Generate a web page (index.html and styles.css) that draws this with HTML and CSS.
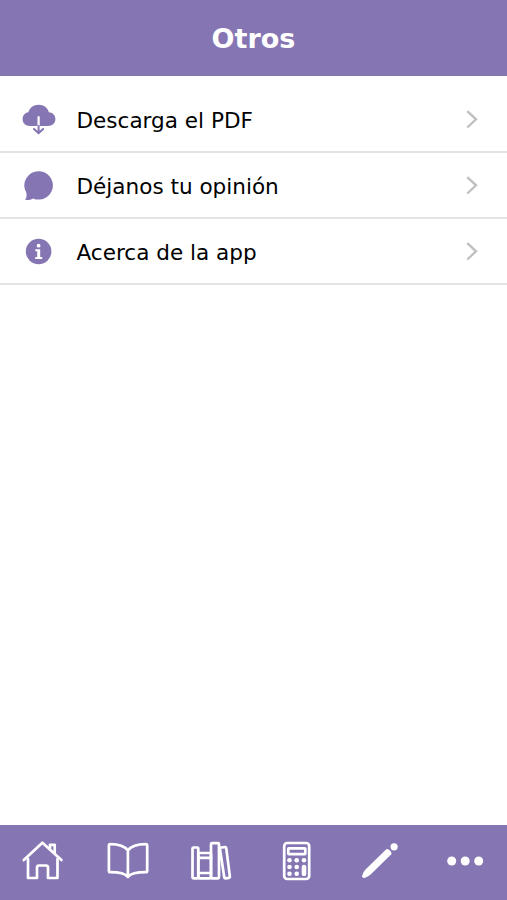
FILE: index.html
```html
<!DOCTYPE html>
<html lang="es">
<head>
    <meta charset="UTF-8">
    <meta name="viewport" content="width=device-width, initial-scale=1.0">
    <title>Otros</title>
    <link rel="stylesheet" href="styles.css">
</head>
<body>

    <header class="header">
        <h1>Otros</h1>
    </header>

    <main class="content">
        <ul class="menu">
            <li>
                <a href="#" class="menu-item">
                    <svg class="menu-icon" viewBox="0 0 40 40">
                        <path fill="currentColor" d="M12 26.9c-4.300 0-7.400-2.700-7.400-6.700 0-3.700 2.300-6.300 5.700-6.900C11.600 8.800 15.500 5.800 20.600 5.800s9.200 3 10.300 7.500c4 .4 6.500 3.100 6.500 6.700 0 4.100-3 6.900-7.400 6.900z"/>
                        <path class="cut" d="M20.600 17.300v9.600"/>
                        <path class="arrow" d="M20.600 26.900v7.200M16 29.900l4.600 4.200 4.600-4.200"/>
                    </svg>
                    <span class="label">Descarga el PDF</span>
                    <svg class="chevron" viewBox="0 0 12 20"><path d="M1.300 2.100l8.700 8.200-8.700 8.200"/></svg>
                </a>
            </li>
            <li>
                <a href="#" class="menu-item">
                    <svg class="menu-icon" viewBox="0 0 40 40">
                        <path fill="currentColor" d="M20.600 6.200a14.200 14.200 0 1 1-5.600 27.200c-2.200 1.300-4.800 1.700-8 1.400 1.500-1.900 1.900-3.700 1.300-7.300A14.200 14.200 0 0 1 20.600 6.200z"/>
                    </svg>
                    <span class="label">Déjanos tu opinión</span>
                    <svg class="chevron" viewBox="0 0 12 20"><path d="M1.300 2.100l8.700 8.200-8.700 8.200"/></svg>
                </a>
            </li>
            <li>
                <a href="#" class="menu-item">
                    <svg class="menu-icon" viewBox="0 0 40 40">
                        <circle fill="currentColor" cx="20.600" cy="20.500" r="12.800"/>
                        <circle fill="#fff" cx="20.600" cy="14.700" r="1.900"/>
                        <path fill="#fff" d="M17.300 18.200h4.900V26h2v2h-7v-2h2v-5.800h-1.900z"/>
                    </svg>
                    <span class="label">Acerca de la app</span>
                    <svg class="chevron" viewBox="0 0 12 20"><path d="M1.300 2.100l8.700 8.200-8.700 8.200"/></svg>
                </a>
            </li>
        </ul>
    </main>

    <nav class="tabs">
        <a href="#" class="tab" aria-label="Inicio">
            <svg viewBox="0 0 48 48">
                <path d="M10 22v19h9V30.5a2 2 0 0 1 2-2h7a2 2 0 0 1 2 2V41h9.5V22"/>
                <path d="M5.8 23L24.4 5.7 43.4 23M32 12V7.8h4.7v8.5"/>
            </svg>
        </a>
        <a href="#" class="tab" aria-label="Lectura">
            <svg viewBox="0 0 48 48">
                <path d="M24.9 13.5c-3-4-9.5-6.3-17.5-6.3a1.5 1.5 0 0 0-1.5 1.5v25a1.5 1.5 0 0 0 1.5 1.5c8 0 14.5 1 17.5 4.7 3-3.7 9.5-4.7 17.8-4.7a1.5 1.5 0 0 0 1.5-1.5v-25a1.5 1.5 0 0 0-1.5-1.5c-8.3 0-14.8 2.3-17.8 6.3zV39.5"/>
            </svg>
        </a>
        <a href="#" class="tab" aria-label="Biblioteca">
            <svg viewBox="0 0 48 48">
                <rect x="5.5" y="10.5" width="5.8" height="30.8" rx="1"/>
                <rect x="11.3" y="16" width="12.7" height="25.3" rx="1"/>
                <path d="M11.3 20.9H24M11.3 36H24"/>
                <rect x="24" y="6.2" width="8" height="35.1" rx="1"/>
                <path d="M33.8 10.6l4.3-.6a1 1 0 0 1 1.1.9l3.7 28.8a1 1 0 0 1-.9 1.1l-3.6.5a1 1 0 0 1-1.1-.9l-4.4-28.7a1 1 0 0 1 .9-1.1z"/>
            </svg>
        </a>
        <a href="#" class="tab" aria-label="Calculadora">
            <svg viewBox="0 0 48 48">
                <rect x="12.2" y="6" width="25" height="36" rx="3"/>
                <rect x="16.3" y="11.3" width="17" height="5.8" rx=".5"/>
                <g class="solid">
                    <circle cx="17.5" cy="23.2" r="2.3"/>
                    <circle cx="24.7" cy="23.2" r="2.3"/>
                    <circle cx="32" cy="23.2" r="2.3"/>
                    <circle cx="17.5" cy="30" r="2.3"/>
                    <circle cx="24.7" cy="30" r="2.3"/>
                    <circle cx="17.5" cy="36.8" r="2.3"/>
                    <circle cx="24.7" cy="36.8" r="2.3"/>
                    <rect x="29.7" y="27.7" width="4.6" height="11.4" rx="2.2"/>
                </g>
            </svg>
        </a>
        <a href="#" class="tab" aria-label="Notas">
            <svg viewBox="0 0 48 48">
                <g class="solid">
                    <circle cx="38.1" cy="9.8" r="3.6"/>
                    <path d="M30.3 12.2q1.6-.8 3.7 1.300 2.100 2.100 1.300 3.700L14.600 37.500q-2.600 2.200-6 3.400-2.500.3-2.600-2 1-3.700 3.500-6.300z"/>
                </g>
            </svg>
        </a>
        <a href="#" class="tab" aria-label="Otros">
            <svg viewBox="0 0 48 48">
                <g class="solid">
                    <circle cx="10.7" cy="24" r="4.5"/>
                    <circle cx="24.2" cy="24" r="4.5"/>
                    <circle cx="37.7" cy="24" r="4.5"/>
                </g>
            </svg>
        </a>
    </nav>

</body>
</html>
```
FILE: styles.css
```css
/* --- Global Setup --- */
* {
    box-sizing: border-box;
}

body {
    margin: 0;
    height: 100vh;
    display: flex;
    flex-direction: column;
    overflow: hidden;
    background-color: #fff;
    color: #000;
    font-family: 'DejaVu Sans', sans-serif;
}

a {
    color: inherit;
    text-decoration: none;
}

svg {
    display: block;
    flex: none;
}

/* --- Header --- */
.header {
    height: 76px;
    display: flex;
    align-items: center;
    justify-content: center;
    background-color: #8675b3;
    color: #fff;
}

.header h1 {
    margin: 0;
    font-size: 27px;
    font-weight: bold;
}

/* --- Menu --- */
.content {
    flex: 1;
    padding-top: 11px;
}

.menu {
    margin: 0;
    padding: 0;
    list-style: none;
}

.menu-item {
    height: 66px;
    display: flex;
    align-items: center;
    padding: 0 29px 0 18px;
    border-bottom: 2px solid #e4e4e4;
    font-size: 21.55px;
}

.menu-icon {
    width: 40px;
    height: 40px;
    color: #8675b3;
}

.menu-icon .cut,
.menu-icon .arrow {
    fill: none;
    stroke: #fff;
    stroke-width: 2.2;
}

.menu-icon .arrow {
    stroke: currentColor;
    stroke-width: 2;
    stroke-linecap: round;
}

.label {
    flex: 1;
    margin-left: 18.5px;
    padding-top: 2px;
}

.chevron {
    width: 12px;
    height: 20px;
    fill: none;
    stroke: #c0c0c0;
    stroke-width: 2.4;
}

/* --- Bottom tabs --- */
.tabs {
    height: 75.5px;
    display: flex;
    background-color: #8675b3;
}

.tab {
    flex: 1;
    display: flex;
    justify-content: center;
    padding-top: 12.5px;
}

.tab svg {
    width: 48px;
    height: 48px;
    fill: none;
    stroke: #fff;
    stroke-width: 2.7;
    stroke-linecap: round;
    stroke-linejoin: round;
}

.tab .solid {
    fill: #fff;
    stroke: none;
}
```
